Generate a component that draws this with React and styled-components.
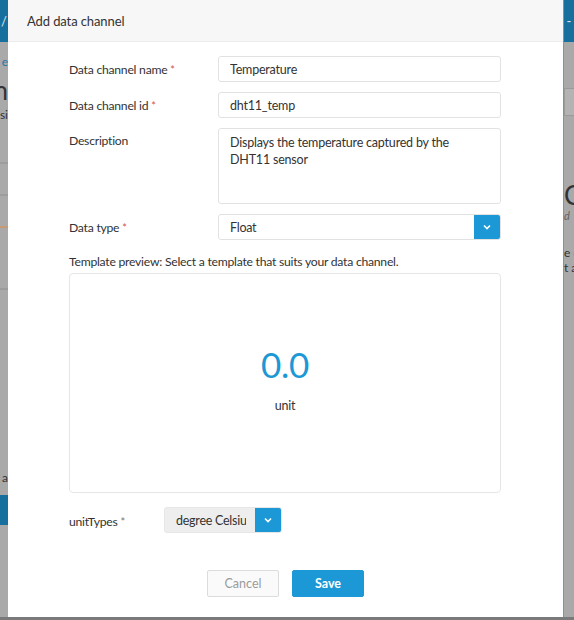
import React, { useState } from 'react';
import styled, { createGlobalStyle } from 'styled-components';

const FONT = `'Lato', 'Noto Sans', sans-serif`;

const GlobalStyle = createGlobalStyle`
  html, body {
    margin: 0;
    padding: 0;
    background: #a9a9a9;
  }
  body {
    font-family: ${FONT};
  }
`;

const Chevron = () => (
  <svg width='10' height='10' viewBox='0 0 10 10'>
    <path d='M2 3.5 L5 6.5 L8 3.5' fill='none' stroke='#fff' strokeWidth='1.6' />
  </svg>
);

const App = () => {
  const [name, setName] = useState('Temperature');
  const [id, setId] = useState('dht11_temp');
  const [desc, setDesc] = useState(
    'Displays the temperature captured by the DHT11 sensor'
  );

  return (
    <>
      <GlobalStyle />
      <Screen>
        <Strip side='left'>
          <StripBar>/</StripBar>
          <Frag color='#1f77a8' top={12}>e</Frag>
          <Frag big top={8}>n</Frag>
          <Frag top={4}>si</Frag>
          <Rule top={40} />
          <Rule top={30} />
          <Rule top={30} orange />
          <Rule top={60} />
          <Frag top={180}>a</Frag>
          <BlueBlock />
        </Strip>

        <Modal>
          <Header>Add data channel</Header>
          <Body>
            <Row>
              <Label>
                Data channel name <Req>*</Req>
              </Label>
              <Input value={name} onChange={(e) => setName(e.target.value)} />
            </Row>
            <Row>
              <Label>
                Data channel id <Req>*</Req>
              </Label>
              <Input value={id} onChange={(e) => setId(e.target.value)} />
            </Row>
            <Row top>
              <Label top>Description</Label>
              <TextArea
                value={desc}
                spellCheck={false}
                onChange={(e) => setDesc(e.target.value)}
              />
            </Row>
            <Row>
              <Label>
                Data type <Req>*</Req>
              </Label>
              <Select>
                <SelectText>Float</SelectText>
                <SelectBtn>
                  <Chevron />
                </SelectBtn>
              </Select>
            </Row>
            <PreviewLabel>
              Template preview: Select a template that suits your data channel.
            </PreviewLabel>
            <Preview>
              <Value>0.0</Value>
              <Unit>unit</Unit>
            </Preview>
            <UnitRow>
              <UnitLabel>
                unitTypes <Req grey>*</Req>
              </UnitLabel>
              <Select small>
                <SelectText grey>degree Celsius</SelectText>
                <SelectBtn>
                  <Chevron />
                </SelectBtn>
              </Select>
            </UnitRow>
            <Actions>
              <Button>Cancel</Button>
              <Button primary>Save</Button>
            </Actions>
          </Body>
        </Modal>

        <Strip side='right'>
          <StripBar>-</StripBar>
          <GhostBox />
          <Frag big top={66}>C</Frag>
          <Frag small top={0}>d</Frag>
          <Frag top={22}>e c</Frag>
          <Frag top={0}>t a</Frag>
        </Strip>
      </Screen>
    </>
  );
};

const Screen = styled.div`
  display: grid;
  grid-template-columns: 8px 555px 11px;
  width: 574px;
  height: 620px;
  overflow: hidden;
  background: #a9a9a9;
  border-bottom: 3px solid #7a7a7a;
  box-sizing: border-box;
`;

const Strip = styled.div`
  display: flex;
  flex-direction: column;
  align-items: ${(p) => (p.side === 'left' ? 'flex-end' : 'flex-start')};
  overflow: hidden;
  background: #a9a9a9;
  border-left: ${(p) => (p.side === 'right' ? '1px solid #8f8f8f' : 'none')};
`;

const StripBar = styled.div`
  align-self: stretch;
  height: 42px;
  background: #176f9d;
  color: #d8e8f0;
  font-size: 13px;
  line-height: 42px;
  text-align: center;
  flex-shrink: 0;
`;

const Frag = styled.div`
  margin-top: ${(p) => p.top}px;
  font-size: ${(p) => (p.big ? '26px' : p.small ? '11px' : '12px')};
  line-height: ${(p) => (p.big ? '26px' : '15px')};
  color: ${(p) => p.color || '#333'};
  white-space: nowrap;
  font-style: ${(p) => (p.small ? 'italic' : 'normal')};
  opacity: ${(p) => (p.small ? 0.6 : 1)};
`;

const Rule = styled.div`
  align-self: stretch;
  margin-top: ${(p) => p.top}px;
  height: 2px;
  background: ${(p) => (p.orange ? '#c89a74' : '#9c9c9c')};
`;

const BlueBlock = styled.div`
  align-self: stretch;
  margin-top: 10px;
  height: 30px;
  background: #176f9d;
`;

const GhostBox = styled.div`
  margin-top: 46px;
  width: 20px;
  height: 26px;
  border: 1px solid #9a9a9a;
  background: #b3b3b3;
`;

const Modal = styled.div`
  display: flex;
  flex-direction: column;
  height: 617px;
  background: #fff;
  color: #333;
`;

const Header = styled.div`
  height: 42px;
  box-sizing: border-box;
  padding: 0 19px;
  display: flex;
  align-items: center;
  background: #f7f7f7;
  border-bottom: 1px solid #ececec;
  font-size: 13px;
  letter-spacing: -0.1px;
  color: #333;
`;

const Body = styled.div`
  display: flex;
  flex-direction: column;
  padding: 14px 62px 0 61px;
  font-size: 12.2px;
  letter-spacing: -0.25px;
`;

const Row = styled.div`
  display: grid;
  grid-template-columns: 149px 283px;
  align-items: ${(p) => (p.top ? 'start' : 'center')};
  margin-bottom: 10px;
`;

const Label = styled.div`
  color: #333;
  padding-top: ${(p) => (p.top ? '5px' : '0')};
`;

const Req = styled.span`
  color: ${(p) => (p.grey ? '#777' : '#d9534f')};
  font-size: 11px;
`;

const fieldBase = `
  box-sizing: border-box;
  width: 283px;
  border: 1px solid #e2e2e2;
  border-radius: 3px;
  background: #fff;
  font-family: ${FONT};
  font-size: 12.5px;
  letter-spacing: -0.2px;
  color: #333;
  outline: none;
`;

const Input = styled.input`
  ${fieldBase}
  height: 26px;
  padding: 0 11px;
`;

const TextArea = styled.textarea`
  ${fieldBase}
  height: 76px;
  padding: 5px 11px;
  line-height: 17px;
  resize: none;
  display: block;
`;

const Select = styled.div`
  display: flex;
  box-sizing: border-box;
  width: ${(p) => (p.small ? '118px' : '283px')};
  height: 26px;
  border: 1px solid ${(p) => (p.small ? '#e6e6e6' : '#e2e2e2')};
  border-radius: 3px;
  overflow: hidden;
  background: ${(p) => (p.small ? '#eeeeee' : '#fff')};
`;

const SelectText = styled.div`
  flex: 1;
  min-width: 0;
  display: flex;
  align-items: center;
  padding-left: 11px;
  margin-right: ${(p) => (p.grey ? '9px' : '0')};
  font-size: 12.5px;
  color: #333;
  white-space: nowrap;
  overflow: hidden;
`;

const SelectBtn = styled.div`
  width: 26px;
  flex-shrink: 0;
  display: flex;
  align-items: center;
  justify-content: center;
  background: #1b98d5;
`;

const PreviewLabel = styled.div`
  margin-top: 4px;
  color: #333;
  line-height: 16px;
`;

const Preview = styled.div`
  margin-top: 3px;
  box-sizing: border-box;
  width: 432px;
  height: 220px;
  border: 1px solid #e6e6e6;
  border-radius: 4px;
  display: flex;
  flex-direction: column;
  align-items: center;
  padding-top: 70px;
`;

const Value = styled.div`
  font-size: 35px;
  font-weight: 400;
  line-height: 40px;
  color: #1b98d5;
`;

const Unit = styled.div`
  margin-top: 14px;
  font-size: 12.5px;
  color: #333;
`;

const UnitRow = styled.div`
  display: grid;
  grid-template-columns: 95px 118px;
  align-items: center;
  margin-top: 14px;
`;

const UnitLabel = styled.div`
  color: #333;
  padding-top: 2px;
`;

const Actions = styled.div`
  display: flex;
  justify-content: center;
  gap: 13px;
  margin-top: 37px;
  margin-left: -61px;
  margin-right: -62px;
`;

const Button = styled.button`
  box-sizing: border-box;
  width: 72px;
  height: 27px;
  border-radius: 2px;
  border: 1px solid ${(p) => (p.primary ? '#1b98d5' : '#dcdcdc')};
  background: ${(p) => (p.primary ? '#1b98d5' : '#fafafa')};
  color: ${(p) => (p.primary ? '#fff' : '#9a9a9a')};
  font-family: ${FONT};
  font-size: 12.5px;
  font-weight: ${(p) => (p.primary ? 700 : 400)};
  cursor: pointer;
`;

export default App;
